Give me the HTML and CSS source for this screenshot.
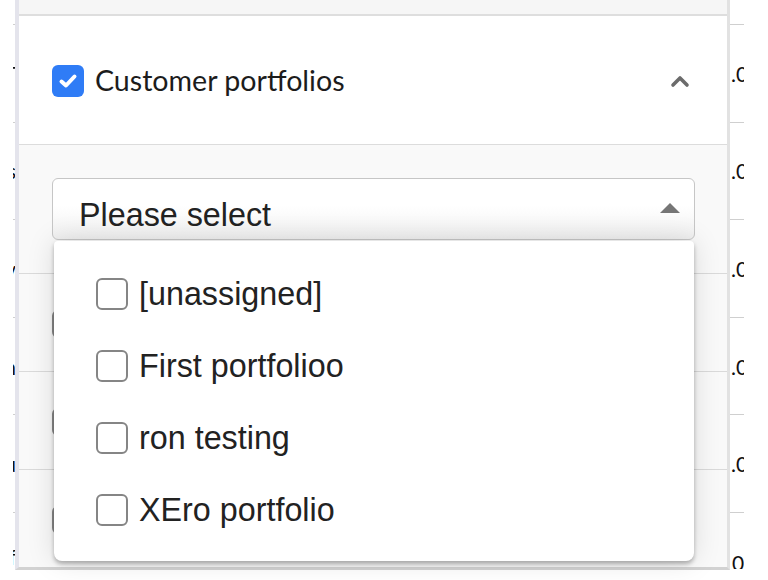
FILE: index.html
```html
<!DOCTYPE html>
<html>
<head>
<meta charset="utf-8">
<link rel="stylesheet" href="styles.css">
</head>
<body>
<div class="page">
  <div class="side side-left">
    <div class="srow first"></div>
    <div class="srow"><span class="frag">T</span></div>
    <div class="srow"><span class="frag">s</span></div>
    <div class="srow"><span class="frag">v</span></div>
    <div class="srow"><span class="frag">n</span></div>
    <div class="srow"><span class="frag">u</span></div>
    <div class="srow last"><span class="frag">f</span></div>
  </div>

  <div class="panel">
    <div class="panel-top"></div>
    <div class="panel-header">
      <svg class="hcheck" width="32" height="32" viewBox="0 0 32 32">
        <rect x="0" y="0" width="32" height="32" rx="6" fill="#2f7cf6"/>
        <path d="M9.5 16.5 L14 20.5 L22.5 11.5" fill="none" stroke="#fff" stroke-width="4" stroke-linecap="round" stroke-linejoin="round"/>
      </svg>
      <span class="htitle">Customer portfolios</span>
      <svg class="chev" width="20" height="14" viewBox="0 0 20 14">
        <polyline points="3,11 10,4 17,11" fill="none" stroke="#6b6b6b" stroke-width="3.6" stroke-linecap="round" stroke-linejoin="round"/>
      </svg>
    </div>
    <div class="panel-body">
      <div class="select-wrap">
        <div class="select">
          <span class="placeholder">Please select</span>
          <svg class="caret" width="20" height="10" viewBox="0 0 20 10"><polygon points="0,10 10,0 20,10" fill="#767676"/></svg>
        </div>
        <div class="menu">
          <label class="opt"><span class="box"></span><span class="otext">[unassigned]</span></label>
          <label class="opt"><span class="box"></span><span class="otext">First portfolioo</span></label>
          <label class="opt"><span class="box"></span><span class="otext">ron testing</span></label>
          <label class="opt"><span class="box"></span><span class="otext">XEro portfolio</span></label>
        </div>
      </div>
      <div class="brow short"></div>
      <div class="brow"><span class="field"></span></div>
      <div class="brow"><span class="field"></span></div>
      <div class="brow nob"><span class="field"></span></div>
    </div>
  </div>

  <div class="side side-right">
    <div class="rrow first"></div>
    <div class="rrow"><span class="num">.00</span></div>
    <div class="rrow"><span class="num">.00</span></div>
    <div class="rrow"><span class="num">.00</span></div>
    <div class="rrow"><span class="num">.00</span></div>
    <div class="rrow"><span class="num">.00</span></div>
    <div class="rrow last"><span class="num nodot">00</span></div>
  </div>
</div>
</body>
</html>
```

FILE: styles.css
```css
html, body {
  margin: 0;
  padding: 0;
  background: #ffffff;
}
body {
  width: 768px;
  height: 580px;
  overflow: hidden;
}
.page {
  display: flex;
  height: 580px;
  font-family: "Liberation Sans", Arial, sans-serif;
}

/* cut-off table behind, left and right */
.side {
  display: flex;
  flex-direction: column;
  height: 570px;
  overflow: hidden;
}
.side-left {
  width: 15px;
  align-items: flex-end;
}
.srow {
  width: 2px;
  height: 96.6px;
  border-bottom: 1px solid #cfcfcf;
  display: flex;
  align-items: center;
  justify-content: flex-end;
  overflow: hidden;
  flex: none;
}
.srow.first { height: 24px; }
.srow.last { height: 56px; border-bottom: none; align-items: flex-end; }
.frag {
  font-family: "Lato", sans-serif;
  font-size: 21px;
  color: #111;
  white-space: nowrap;
  margin-right: -1px;
}

.side-right {
  flex: 1;
}
.rrow {
  width: 14px;
  height: 96.6px;
  border-bottom: 1px solid #cfcfcf;
  display: flex;
  align-items: center;
  overflow: hidden;
  flex: none;
}
.rrow.first { height: 24px; }
.rrow.last { height: 56px; border-bottom: none; align-items: flex-end; }
.num {
  font-family: "Lato", sans-serif;
  font-size: 21px;
  color: #111;
  white-space: nowrap;
  margin-left: 1px;
  line-height: 1;
}
.num.nodot { margin-left: 2px; margin-bottom: -4px; }

/* panel */
.panel {
  width: 708px;
  height: 567px;
  border-left: 4px solid #e4e4ec;
  border-right: 3px solid #e2e2e2;
  border-bottom: 3px solid #d2d2d2;
  display: flex;
  flex-direction: column;
  flex: none;
}
.panel-top {
  height: 14px;
  background: #f6f6f6;
  border-bottom: 2px solid #dedede;
  flex: none;
}
.panel-header {
  height: 128px;
  background: #ffffff;
  border-bottom: 1px solid #dcdcdc;
  display: flex;
  align-items: center;
  padding: 0 37px 0 33px;
  flex: none;
}
.hcheck { flex: none; margin-top: 1px; }
.htitle {
  font-family: "Lato", sans-serif;
  font-size: 28.6px;
  color: #1c1c1c;
  margin-left: 11px;
  flex: 1;
}
.chev { flex: none; margin-top: 1px; }

.panel-body {
  flex: 1;
  background: #f9f9f9;
  padding: 33px 32px 0 33px;
  display: flex;
  flex-direction: column;
}

.select-wrap {
  position: relative;
  height: 62px;
  flex: none;
}
.select {
  height: 60px;
  border: 1px solid #c6c6c6;
  border-radius: 6px;
  background: linear-gradient(#ffffff 45%, #f0f0f0);
  display: flex;
  align-items: center;
  padding: 0 14px 0 26px;
}
.placeholder {
  flex: 1;
  font-size: 32.3px;
  color: #222;
  margin-top: 12px;
}
.caret { flex: none; margin-top: -2px; }

.menu {
  position: absolute;
  top: 63px;
  left: 2px;
  right: 1px;
  height: 283px;
  padding-top: 37px;
  background: #fff;
  border-radius: 4px 4px 8px 8px;
  box-shadow: 0 3px 4px rgba(0,0,0,0.28), 0 0 28px rgba(0,0,0,0.13);
  z-index: 2;
  display: flex;
  flex-direction: column;
  gap: 40px;
}
.opt {
  display: flex;
  align-items: center;
  height: 32px;
  padding-left: 42px;
}
.box {
  width: 28px;
  height: 28px;
  border: 2px solid #858585;
  border-radius: 6px;
  background: #fff;
  flex: none;
}
.otext {
  font-size: 32.3px;
  color: #222;
  margin-left: 11px;
  margin-top: 1px;
}

.brow {
  margin: 0 -32px 0 -33px;
  padding: 0 32px 0 33px;
  height: 97px;
  border-bottom: 1px solid #dadada;
  flex: none;
  display: flex;
  align-items: flex-start;
}
.brow.short { height: 33px; }
.brow.nob { border-bottom: none; }
.field {
  display: block;
  margin-top: 36px;
  width: 200px;
  height: 24px;
  border: 2px solid #8a8a8a;
  border-radius: 6px;
  background: #fff;
}
```
